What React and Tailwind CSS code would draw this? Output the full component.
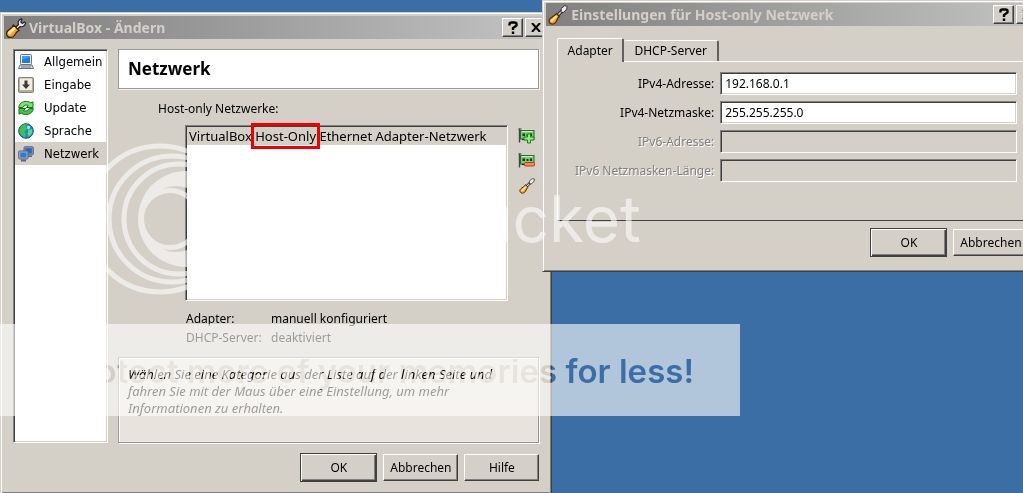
import React, { useState } from 'react';

const categories = ['Allgemein', 'Eingabe', 'Update', 'Sprache', 'Netzwerk'];

const CategoryIcon = ({ name }) => {
  if (name === 'Allgemein') {
    return (
      <svg viewBox="0 0 16 16" className="size-4 shrink-0">
        <rect x="2.5" y="0.5" width="11" height="10" rx="1" fill="#eef2f8" stroke="#6a7080" />
        <rect x="4" y="2" width="8" height="7" fill="#3d9cf5" />
        <path d="M4 6l8-3v6H4z" fill="#1f7be0" />
        <path d="M2 11h12l1.500 3.500H.5z" fill="#d8dce4" stroke="#6a7080" />
        <path d="M3 13h10" stroke="#6a7080" />
      </svg>
    );
  }
  if (name === 'Eingabe') {
    return (
      <svg viewBox="0 0 16 16" className="size-4 shrink-0">
        <rect x="0.5" y="0.5" width="15" height="15" rx="1" fill="#b5ad9c" stroke="#8a8374" />
        <rect x="2" y="1.500" width="12" height="11.500" fill="#f1ede2" />
        <path d="M6.500 3.500h3v4H12L8 12 4 7.500h2.500z" fill="#3d3a35" />
      </svg>
    );
  }
  if (name === 'Update') {
    return (
      <svg viewBox="0 0 16 16" className="size-4 shrink-0" strokeLinejoin="round">
        <path d="M.7 7.500C1.200 3.500 4.500 1.200 8.500 1.500c1.800 0 3.300.6 4.300 1.500L15 1.800v5.700H8.500l2-2C8.500 4.300 6 5 4.800 7.500z" fill="#7be570" stroke="#14741a" />
        <path d="M15.300 8.500c-.5 4-3.800 6.300-7.800 6-1.800 0-3.300-.6-4.300-1.500L1 14.200V8.500h6.500l-2 2c2 1.200 4.500.5 5.700-2z" fill="#3fc443" stroke="#14741a" />
      </svg>
    );
  }
  if (name === 'Sprache') {
    return (
      <svg viewBox="0 0 16 16" className="size-4 shrink-0">
        <circle cx="8" cy="8" r="7.300" fill="#2a7fd8" stroke="#1c4a86" />
        <path d="M3 3.500C5 1.500 7.500 1 9 1.500L8 4l1 2-3 3 2 2-1 3.500C3 13 1 9.500 1.500 6.500z" fill="#3cc648" />
        <path d="M10.500 7l3.500-1c1 3-.5 6-3 7.500L9.500 11z" fill="#4fe07a" />
        <path d="M9.500 2.500l3 1-1.500 3-2-1z" fill="#a9e8ff" />
      </svg>
    );
  }
  return (
    <svg viewBox="0 0 16 16" className="size-4 shrink-0">
      <rect x="6" y="0.800" width="9.300" height="8" rx="1" fill="#8e9ab2" stroke="#56627c" />
      <rect x="7.500" y="2.200" width="6.300" height="5.200" fill="#2468c4" />
      <path d="M9 9.500h5v1.500H9z" fill="#596480" />
      <rect x="0.700" y="5" width="9.300" height="8" rx="1" fill="#a8b2c6" stroke="#56627c" />
      <rect x="2.200" y="6.500" width="6.300" height="5" fill="#2f7ad6" />
      <path d="M3 13.500h5v2H3z" fill="#596480" />
    </svg>
  );
};

const WrenchIcon = () => (
  <svg viewBox="0 0 20 20" className="size-5 shrink-0">
    <path d="M9.500 9.500L12.500 6.500c-1-2.500.3-5 2.800-5.700l.7 1-1.200 2.200 1.400 1.400L18.500 4l1 .8c-.2 2.800-2.800 4.700-5.300 3.700L11 11.500z" fill="#ececec" stroke="#222" strokeWidth="1.200" />
    <path d="M7.500 7l5.500 5.500-2.200 1.500-2.500 3.500c-1.500 2.300-4.700 2.500-6.500 1S.2 14.200 2 12.500L6 9.500z" fill="#f9a01f" stroke="#3a2003" strokeWidth="1.200" />
    <path d="M3.500 15L8 10.500" stroke="#ffe9a0" strokeWidth="3" strokeLinecap="round" />
  </svg>
);

const ScrewdriverIcon = ({ className }) => (
  <svg viewBox="0 0 20 20" className={className} strokeLinecap="round">
    <path d="M10.500 9.500L14 6" stroke="#2b2b2b" strokeWidth="3.400" />
    <path d="M10.500 9.500L14 6" stroke="#d8d8d8" strokeWidth="1.400" />
    <path d="M13 7l.3-3.500L16.500.800l2.700.4-.4 2.800-2.800 3z" fill="#ececec" stroke="#3a3a3a" strokeWidth="1" />
    <path d="M8.500 8.500l3 3-1.300 1-2 4c-1.200 2.200-3.700 3.200-5.700 2s-1.800-4 .3-5.500l4.200-3z" fill="#f6a623" stroke="#4f2c05" strokeWidth="1.200" />
    <path d="M3.800 15.800l4-4" stroke="#ffe998" strokeWidth="2" />
  </svg>
);

const CardIcon = ({ remove }) => (
  <svg viewBox="0 0 17 16" className="h-4 w-[17px]">
    <path d="M1.500.5v14" stroke="#444" strokeWidth="1.400" />
    <path d="M.5 1h3" stroke="#444" />
    <rect x="2.500" y="2.500" width="13.500" height="8.500" fill="#7cc878" stroke="#2c6b2e" />
    <path d="M3.500 3.500h11.500" stroke="#c4f0bd" />
    <path d="M4.500 5.500h2.500v2.500H4.500zM8.500 6h2v2h-2zM12 5.500h2v2.500h-2z" fill="#123c16" />
    <path d="M4 11.500h4" stroke="#222" strokeWidth="1.200" />
    {remove ? (
      <rect x="6.500" y="9.500" width="10" height="3.500" rx="1" fill="#f58a55" stroke="#b4431a" />
    ) : (
      <path d="M9.500 6h3v3h3.500v3h-3.500v3h-3v-3H6V9h3.500z" fill="#8cf07c" stroke="#1a7d1d" />
    )}
  </svg>
);

const TitleButton = ({ label, children }) => (
  <button
    aria-label={label}
    className="flex h-[19px] w-[21px] items-center justify-center border border-t-white border-l-white border-r-[#404040] border-b-[#404040] bg-[#d4d0c8] shadow-[inset_-1px_-1px_0_#808080]"
  >
    {children}
  </button>
);

const TitleBar = ({ icon, title }) => (
  <div className="flex h-[23px] items-center gap-[3px] bg-linear-to-r from-[#808080] to-[#c3c3c3] pr-[2px] pl-[2px]">
    {icon}
    <h1 className="flex-1 truncate text-sm leading-[22px] font-bold text-[#d4d0c8]">{title}</h1>
    <div className="flex gap-[2px]">
      <TitleButton label="Direkthilfe">
        <svg viewBox="0 0 10 13" className="h-[13px] w-[10px]" fill="none" stroke="#000" strokeWidth="2.400">
          <path d="M1.500 4.500V3q0-1.500 2-1.500h3Q8.500 1.500 8.500 3v1.500L5 7v2" />
          <path d="M5 10.500V13" />
        </svg>
      </TitleButton>
      <TitleButton label="Schließen">
        <svg viewBox="0 0 10 9" className="h-[9px] w-[10px]" stroke="#000" strokeWidth="2">
          <path d="M1 0l8 9M9 0L1 9" />
        </svg>
      </TitleButton>
    </div>
  </div>
);

const DialogButton = ({ primary, children }) => (
  <button
    className={
      primary
        ? 'h-[29px] w-[77px] border border-[#404040] bg-[#d4d0c8] text-xs shadow-[inset_1px_1px_0_#fff,inset_-1px_-1px_0_#404040,inset_-2px_-2px_0_#808080]'
        : 'h-[27px] w-[75px] border border-t-white border-l-white border-r-[#404040] border-b-[#404040] bg-[#d4d0c8] text-xs shadow-[inset_-1px_-1px_0_#808080]'
    }
  >
    {children}
  </button>
);

const SettingsWindow = () => {
  const [selected, setSelected] = useState('Netzwerk');

  return (
    <section className="absolute top-3 left-0 w-[54%] border border-t-[#d4d0c8] border-l-[#d4d0c8] border-r-[#404040] border-b-[#404040] bg-[#d4d0c8] p-[3px] shadow-[inset_1px_1px_0_#fff,inset_-1px_-1px_0_#808080]">
      <TitleBar icon={<WrenchIcon />} title="VirtualBox - Ändern" />
      <div className="flex gap-[10px] px-[9px] pt-[10px]">
        <ul className="w-[95px] shrink-0 border border-t-[#808080] border-l-[#808080] border-r-white border-b-white bg-white shadow-[inset_1px_1px_0_#404040,inset_-1px_-1px_0_#d4d0c8]">
          {categories.map((name) => (
            <li key={name} className="px-px">
              <button
                onClick={() => setSelected(name)}
                className={`flex h-[23px] w-full items-center gap-[10px] pl-[3px] font-['DejaVu_Sans_Condensed','DejaVu_Sans',sans-serif] text-[13px] ${selected === name ? 'bg-[#d4d0c8]' : ''}`}
              >
                <CategoryIcon name={name} />
                {name}
              </button>
            </li>
          ))}
        </ul>
        <div className="min-w-0 flex-1">
          <div className="border border-[#9a9a9a] bg-white px-[9px] py-[7px] shadow-[1px_1px_0_#f4f2ee]">
            <h2 className="text-[17px] leading-6 font-bold">Netzwerk</h2>
          </div>
          <div className="pt-[11px] pl-10">
            <p className="text-xs leading-[18px]">Host-only Netzwerke:</p>
            <div className="flex gap-[10px] pt-[7px] pr-1 pl-[27px]">
              <div className="h-[176px] min-w-0 flex-1 border border-t-[#808080] border-l-[#808080] border-r-white border-b-white bg-white p-px shadow-[inset_1px_1px_0_#404040,inset_-1px_-1px_0_#d4d0c8]">
                <div className="h-[18px] bg-[#d4d0c8] pl-[2px] text-[13px] leading-[18px] whitespace-nowrap">
                  VirtualBox{' '}
                  <span className="inline-block outline-[3px] outline-offset-1 outline-[#f00000]">Host-Only</span>{' '}
                  Ethernet Adapter-Netzwerk
                </div>
              </div>
              <div className="flex flex-col items-center gap-[9px] pt-[3px]">
                <button aria-label="Netzwerk hinzufügen"><CardIcon /></button>
                <button aria-label="Netzwerk entfernen"><CardIcon remove /></button>
                <button aria-label="Netzwerk bearbeiten"><ScrewdriverIcon className="size-4" /></button>
              </div>
            </div>
            <dl className="grid grid-cols-[85px_1fr] pt-[8px] pl-[28px] text-xs leading-[19px]">
              <dt>Adapter:</dt>
              <dd>manuell konfiguriert</dd>
              <dt>DHCP-Server:</dt>
              <dd>deaktiviert</dd>
            </dl>
          </div>
          <div className="mt-[10px] h-[86px] border border-[#9a9a9a] bg-[#e8e4dd] py-2 pr-6 pl-[9px] shadow-[inset_1px_1px_0_#fff,1px_1px_0_#fff]">
            <p className="text-[13px] leading-[17px] italic">
              Wählen Sie eine Kategorie aus der Liste auf der linken Seite und
              <br />
              fahren Sie mit der Maus über eine Einstellung, um mehr
              <br />
              Informationen zu erhalten.
            </p>
          </div>
        </div>
      </div>
      <div className="flex items-center justify-end gap-[6px] pt-[10px] pr-[9px] pb-2">
        <DialogButton primary>OK</DialogButton>
        <DialogButton>Abbrechen</DialogButton>
        <DialogButton>Hilfe</DialogButton>
      </div>
    </section>
  );
};

const fields = [
  { id: 'ipv4', label: 'IPv4-Adresse:', value: '192.168.0.1' },
  { id: 'mask', label: 'IPv4-Netzmaske:', value: '255.255.255.0' },
  { id: 'ipv6', label: 'IPv6-Adresse:', value: '', disabled: true },
  { id: 'prefix', label: 'IPv6 Netzmasken-Länge:', value: '', disabled: true },
];

const NetworkWindow = () => (
  <section className="absolute top-0 left-[53%] w-[49%] border border-t-[#d4d0c8] border-l-[#d4d0c8] border-r-[#404040] border-b-[#404040] bg-[#d4d0c8] p-[3px] pt-[2px] shadow-[inset_1px_1px_0_#fff,inset_-1px_-1px_0_#808080]">
    <TitleBar icon={<ScrewdriverIcon className="size-5 shrink-0" />} title="Einstellungen für Host-only Netzwerk" />
    <div className="px-[11px] pt-3">
      <div className="flex items-end text-xs">
        <button className="-mb-px h-6 w-[67px] rounded-t-[2px] border-t border-r-2 border-l border-t-white border-r-[#606060] border-l-white bg-[#d4d0c8]">
          Adapter
        </button>
        <button className="h-[21px] w-[95px] rounded-t-[2px] border-t border-r-2 border-t-white border-r-[#606060]">
          DHCP-Server
        </button>
      </div>
      <div className="flex h-[160px] flex-col gap-[6px] border border-t-white border-l-white border-r-[#404040] border-b-[#404040] pt-[10px] pr-[10px]">
        {fields.map((field) => (
          <div key={field.id} className="flex items-center gap-[6px]">
            <label
              htmlFor={field.id}
              className={`w-[156px] shrink-0 text-right text-xs whitespace-nowrap ${field.disabled ? 'text-[#808080] [text-shadow:1px_1px_0_#fff]' : ''}`}
            >
              {field.label}
            </label>
            <input
              id={field.id}
              defaultValue={field.value}
              disabled={field.disabled}
              className="h-[23px] min-w-0 flex-1 border border-t-[#808080] border-l-[#808080] border-r-white border-b-white bg-white px-1 text-xs shadow-[inset_1px_1px_0_#404040,inset_-1px_-1px_0_#d4d0c8] disabled:bg-[#d4d0c8]"
            />
          </div>
        ))}
      </div>
      <div className="flex items-center justify-end gap-[6px] pt-[7px] pb-[11px]">
        <DialogButton primary>OK</DialogButton>
        <DialogButton>Abbrechen</DialogButton>
      </div>
    </div>
  </section>
);

const Watermark = () => (
  <>
    <div className="pointer-events-none absolute top-[142px] left-[84px] flex w-[557px] items-center justify-between font-['Inter',sans-serif]">
      <svg viewBox="0 0 154 154" className="size-[154px]" fill="none" stroke="#fff" strokeWidth="5">
        <g opacity=".58">
          <circle cx="76" cy="77" r="73" />
          <circle cx="88" cy="77" r="63" />
          <circle cx="95" cy="77" r="55" />
          <circle cx="86" cy="77" r="28.500" />
          <path
            d="M102 29a48 48 0 1 0 0 96a48 48 0 1 0 0-96zM92 44a33 33 0 1 1 0 66a33 33 0 1 1 0-66z"
            fill="#fff"
            fillRule="evenodd"
            stroke="none"
          />
        </g>
      </svg>
      <span className="text-[64px] leading-[80px] text-white/58">photobucket</span>
    </div>
    {/* screen keeps black letters see-through */}
    <div className="pointer-events-none absolute top-[324px] left-0 w-[740px] bg-[#999] pt-[25px] pr-[46px] pb-[23px] text-right font-['Inter',sans-serif] text-[33px] leading-[44px] font-semibold whitespace-nowrap text-black mix-blend-screen">
      Protect more of your memories for less!
    </div>
  </>
);

const App = () => {
  return (
    <main className="relative isolate h-screen overflow-hidden bg-[#3b6ea5] font-['Noto_Sans','DejaVu_Sans',sans-serif] text-black">
      <SettingsWindow />
      <NetworkWindow />
      <Watermark />
    </main>
  );
};

export default App;
